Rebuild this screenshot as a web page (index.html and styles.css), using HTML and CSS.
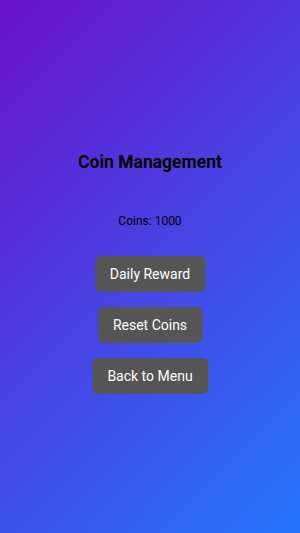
FILE: index.html
```html
<!DOCTYPE html>
<html lang="en">
<head>
	<meta charset="UTF-8">
	<title>Coin Management</title>
	<link rel="stylesheet" href="styles.css">
</head>
<body>
	<div class="screen">
		<h1 class="title">Coin Management</h1>
		<p class="coins">Coins: <span id="coins">1000</span></p>
		<div class="actions">
			<button class="btn">Daily Reward</button>
			<button class="btn">Reset Coins</button>
			<button class="btn">Back to Menu</button>
		</div>
	</div>
</body>
</html>
```

FILE: styles.css
```css
html,body{
	width:100%;height:100%;margin:0;padding:0;overflow:hidden;
}
body{
	background:linear-gradient(135deg,#6a11cb 0%,#2575fc 100%);
	font-family:Roboto,"Liberation Sans",sans-serif;
	color:#000;
}
.screen{
	height:100%;box-sizing:border-box;
	display:flex;flex-direction:column;align-items:center;justify-content:center;
	padding-top:12px;
}
.title{
	margin:0;
	font-size:17.5px;line-height:21px;font-weight:700;
}
.coins{
	margin:41px 0 0;
	font-size:12px;line-height:14px;
}
.actions{
	margin-top:28px;
	display:flex;flex-direction:column;align-items:center;gap:15px;
}
.btn{
	height:36px;padding:0 15px;
	border:0;border-radius:5px;
	background:#555;color:#fff;
	font-family:Roboto,"Liberation Sans",sans-serif;font-size:14px;
}
```
